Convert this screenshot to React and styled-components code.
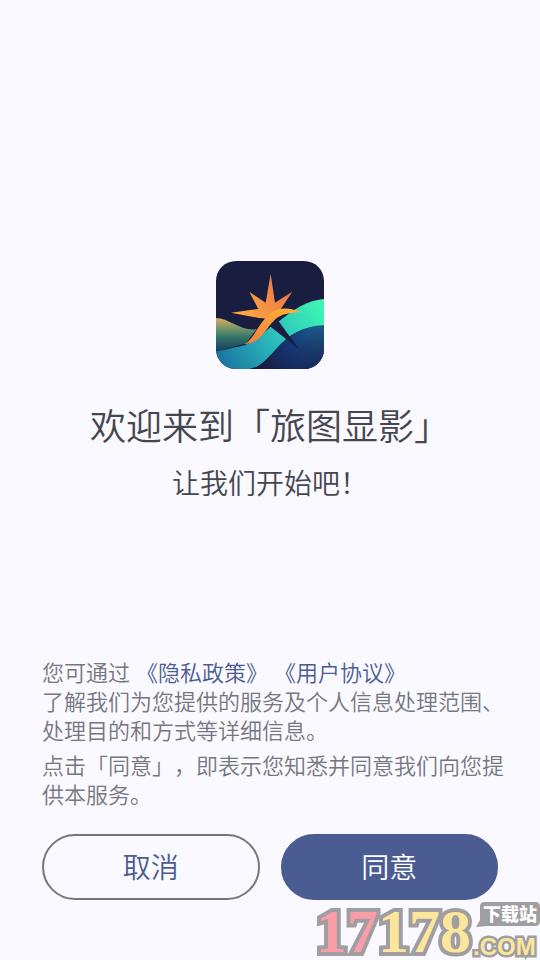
import React from "react";
import styled, { createGlobalStyle } from "styled-components";

const GlobalStyle = createGlobalStyle`
  * {
    box-sizing: border-box;
  }

  body {
    margin: 0;
    background: #faf9ff;
    font-family: "Noto Sans CJK SC", "Noto Sans", sans-serif;
    font-weight: 350;
    text-spacing-trim: space-all;
  }
`;

const Page = styled.div`
  position: relative;
  min-height: 100vh;
  display: flex;
  flex-direction: column;
  padding: 0 42px 60px;
  overflow: hidden;
`;

const Hero = styled.main`
  flex: 1;
  display: flex;
  flex-direction: column;
  align-items: center;
  justify-content: center;
  padding-top: 105px;
  color: #45464f;
  text-align: center;
`;

const Logo = styled.svg`
  width: 108px;
  height: 108px;
  border-radius: 20px;
`;

const Title = styled.h1`
  margin: 31px 0 0;
  font-size: 36px;
  font-weight: inherit;
  line-height: 48px;
`;

const Subtitle = styled.p`
  margin: 14px 0 0;
  font-size: 28px;
  line-height: 40px;
`;

const Notice = styled.section`
  margin-right: -8px;
  color: #767680;
  font-size: 22px;
  line-height: 29px;
`;

const Paragraph = styled.p`
  margin: 0;

  & + & {
    margin-top: 6px;
  }
`;

const PolicyLink = styled.a`
  margin-left: 6px;
  color: #4a5c92;
  text-decoration: none;
`;

const Actions = styled.div`
  display: flex;
  gap: 21px;
  margin-top: 26px;
`;

const Button = styled.button`
  flex: 1;
  height: 66px;
  padding: 0 0 2px;
  border: 2px solid ${(props) => (props.$primary ? "#4a5c92" : "#767680")};
  border-radius: 33px;
  background: ${(props) => (props.$primary ? "#4a5c92" : "transparent")};
  color: ${(props) => (props.$primary ? "#ffffff" : "#4a5c92")};
  font: inherit;
  font-size: 28px;
  cursor: pointer;
`;

const Watermark = styled.svg`
  position: absolute;
  right: 0;
  bottom: 0;
  width: 224px;
  height: 60px;
  pointer-events: none;
`;

const MarkText = styled.text`
  font-weight: 700;
  fill: #fbe69c;
  stroke: #a09ea1;
  stroke-linejoin: miter;
  paint-order: stroke;
`;

const Digits = styled(MarkText)`
  font-family: "Liberation Serif", serif;
  font-size: 62px;
  stroke-width: 8px;
`;

const Domain = styled(MarkText)`
  font-family: "Liberation Sans", sans-serif;
  font-size: 24px;
  stroke-width: 5px;
`;

const TagText = styled.text`
  font-family: "Noto Sans CJK SC", sans-serif;
  font-size: 18px;
  font-weight: 900;
  fill: #ffffff;
`;

function AppLogo() {
  return (
    <Logo viewBox="0 0 324 324" aria-hidden="true">
      <defs>
        <linearGradient id="hill" x1="0" y1="0" x2="0" y2="1">
          <stop offset="0" stopColor="#e3aa64" />
          <stop offset="0.25" stopColor="#879b66" />
          <stop offset="0.55" stopColor="#36776a" />
          <stop offset="1" stopColor="#163b5c" />
        </linearGradient>
        <linearGradient id="band" gradientUnits="userSpaceOnUse" x1="20" y1="320" x2="310" y2="130">
          <stop offset="0" stopColor="#1b72a0" />
          <stop offset="0.5" stopColor="#2bbdbd" />
          <stop offset="1" stopColor="#3ef3b4" />
        </linearGradient>
        <linearGradient id="sea" gradientUnits="userSpaceOnUse" x1="150" y1="324" x2="324" y2="220">
          <stop offset="0" stopColor="#191c42" />
          <stop offset="0.5" stopColor="#153876" />
          <stop offset="1" stopColor="#1c5f8c" />
        </linearGradient>
        <linearGradient id="deep" gradientUnits="userSpaceOnUse" x1="240" y1="240" x2="310" y2="324">
          <stop offset="0" stopColor="#182752" stopOpacity="0" />
          <stop offset="1" stopColor="#182752" stopOpacity="0.9" />
        </linearGradient>
        <linearGradient id="star" gradientUnits="userSpaceOnUse" x1="100" y1="170" x2="220" y2="90">
          <stop offset="0" stopColor="#ffa641" />
          <stop offset="1" stopColor="#e97644" />
        </linearGradient>
        <linearGradient id="swoosh" x1="0" y1="1" x2="0.7" y2="0">
          <stop offset="0" stopColor="#f47d3f" />
          <stop offset="1" stopColor="#ffae36" />
        </linearGradient>
      </defs>
      <rect width="324" height="324" fill="#191e40" />
      <path d="M0 171C39 171 71 210 121 205L88 249C60 252 30 269 0 272Z" fill="url(#hill)" />
      <path d="M324 193C262 195 218 220 178 266C146 303 126 320 98 324H324Z" fill="url(#sea)" />
      <path d="M324 193C262 195 218 220 178 266C146 303 126 320 98 324H324Z" fill="url(#deep)" />
      <path
        d="M324 114C270 118 231 147 189 181L166 196C137 221 113 247 72 256C42 262 24 269 0 271V324H98C126 320 146 303 178 266C218 220 262 195 324 193Z"
        fill="url(#band)"
      />
      <path d="M166 170L188 181L249 265L162 196Z" fill="#191e40" />
      <path
        d="M45 155L127 144L100 93L149 125L164 38L177 125L229 92L195 143L160 173L129 171Z"
        fill="url(#star)"
      />
      <path
        d="M85 250C111 233 122 203 141 180C169 143 204 132 255 154C222 154 195 160 178 175C160 191 146 218 130 231C117 242 103 247 85 250Z"
        fill="url(#swoosh)"
      />
    </Logo>
  );
}

function SiteMark() {
  return (
    <Watermark viewBox="0 0 224 60" role="img" aria-label="17178.com 下载站">
      <Digits x="0" y="52">
        <tspan fill="#fb9ca9">17</tspan>178
      </Digits>
      <path d="M168 2H219Q224 2 224 7V21Q224 26 219 26H172L160 27L164 20V7Q164 2 168 2Z" fill="#a09ea1" />
      <TagText x="167" y="21">下载站</TagText>
      <Domain x="157" y="55">.COM</Domain>
    </Watermark>
  );
}

function App() {
  return (
    <>
      <GlobalStyle />
      <Page>
        <Hero>
          <AppLogo />
          <Title>欢迎来到「旅图显影」</Title>
          <Subtitle>让我们开始吧！</Subtitle>
        </Hero>
        <Notice>
          <Paragraph>
            您可通过
            <PolicyLink href="#privacy">《隐私政策》</PolicyLink>
            <PolicyLink href="#terms">《用户协议》</PolicyLink>
            <br />
            了解我们为您提供的服务及个人信息处理范围、处理目的和方式等详细信息。
          </Paragraph>
          <Paragraph>点击「同意」，即表示您知悉并同意我们向您提供本服务。</Paragraph>
        </Notice>
        <Actions>
          <Button type="button">取消</Button>
          <Button type="button" $primary>同意</Button>
        </Actions>
        <SiteMark />
      </Page>
    </>
  );
}

export default App;
